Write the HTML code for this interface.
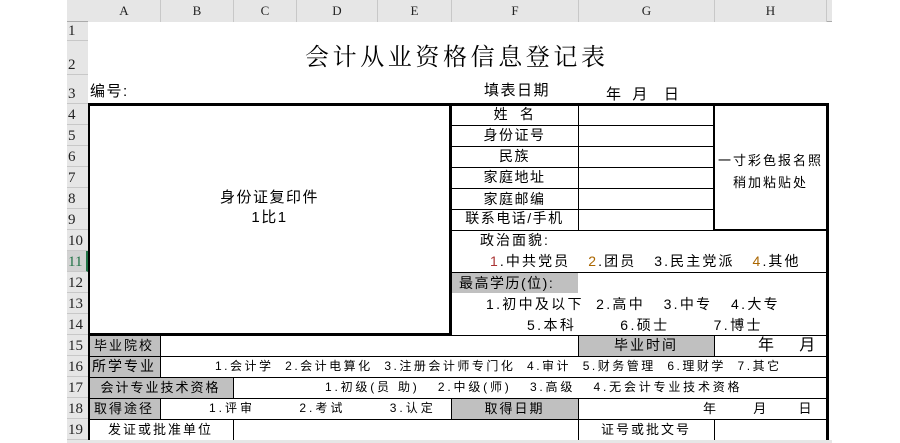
<!DOCTYPE html>
<html><head><meta charset="utf-8"><style>
*{margin:0;padding:0;box-sizing:border-box}
body{width:900px;height:443px;background:#fff;position:relative;overflow:hidden;font-family:"Liberation Sans","Noto Sans CJK SC",sans-serif;font-size:13px;color:#000}
.a{position:absolute}
.h{background:#e6e6e6;color:#222;font-family:"Liberation Serif","Noto Serif CJK SC",serif;font-size:13px;text-align:center;line-height:22px}
.rh{position:absolute;left:67px;width:21px;background:#e6e6e6;border-bottom:1px solid #c8c8c8;font-family:"Liberation Serif",serif;font-size:15px;color:#222;text-align:left;padding-left:1px;display:flex;align-items:flex-end}
.t{position:absolute;white-space:nowrap;line-height:21px;letter-spacing:1.5px}
.g{position:absolute;background:#c0c0c0}
.l{position:absolute;background:#000}
</style></head><body>
<div class="a" style="left:67px;top:0;width:765px;height:22px;background:#e6e6e6;border-bottom:1px solid #ababab"></div>
<div class="a h" style="left:88px;top:0;width:72px">A</div>
<div class="a h" style="left:160px;top:0;width:73px;border-left:1px solid #c8c8c8">B</div>
<div class="a h" style="left:233px;top:0;width:63px;border-left:1px solid #c8c8c8">C</div>
<div class="a h" style="left:296px;top:0;width:81px;border-left:1px solid #c8c8c8">D</div>
<div class="a h" style="left:377px;top:0;width:74px;border-left:1px solid #c8c8c8">E</div>
<div class="a h" style="left:451px;top:0;width:127px;border-left:1px solid #c8c8c8">F</div>
<div class="a h" style="left:578px;top:0;width:136px;border-left:1px solid #c8c8c8">G</div>
<div class="a h" style="left:714px;top:0;width:113px;border-left:1px solid #c8c8c8;border-right:1px solid #c8c8c8">H</div>
<div class="rh" style="top:22px;height:19px">1</div>
<div class="rh" style="top:41px;height:34px">2</div>
<div class="rh" style="top:75px;height:29px">3</div>
<div class="rh" style="top:104px;height:21px">4</div>
<div class="rh" style="top:125px;height:21px">5</div>
<div class="rh" style="top:146px;height:21px">6</div>
<div class="rh" style="top:167px;height:21px">7</div>
<div class="rh" style="top:188px;height:21px">8</div>
<div class="rh" style="top:209px;height:21px">9</div>
<div class="rh" style="top:230px;height:21px">10</div>
<div class="rh" style="top:251px;height:21px;background:#d2d2d2;color:#217346;border-right:2px solid #217346">11</div>
<div class="rh" style="top:272px;height:21px">12</div>
<div class="rh" style="top:293px;height:21px">13</div>
<div class="rh" style="top:314px;height:21px">14</div>
<div class="rh" style="top:335px;height:21px">15</div>
<div class="rh" style="top:356px;height:21px">16</div>
<div class="rh" style="top:377px;height:21px">17</div>
<div class="rh" style="top:398px;height:21px">18</div>
<div class="rh" style="top:419px;height:21px">19</div>
<div class="a" style="left:67px;top:440px;width:765px;height:3px;background:#e6e6e6"></div>

<div class="t" style="left:305px;top:42px;font-size:24px;line-height:32px;letter-spacing:3.6px;font-family:'Liberation Serif','Noto Serif CJK SC',serif">会计从业资格信息登记表</div>
<div class="t" style="left:90px;top:81px;font-size:15px">编号:</div>
<div class="t" style="left:484px;top:80px;font-size:15px">填表日期</div>
<div class="t" style="left:606px;top:84px;font-size:15px;letter-spacing:1px">年&nbsp; 月&nbsp;&nbsp; 日</div>

<div class="g" style="left:452px;top:273px;width:126px;height:20px"></div>
<div class="g" style="left:89px;top:336px;width:71px;height:20px"></div>
<div class="g" style="left:579px;top:336px;width:135px;height:20px"></div>
<div class="g" style="left:89px;top:357px;width:71px;height:20px"></div>
<div class="g" style="left:89px;top:378px;width:144px;height:20px"></div>
<div class="g" style="left:89px;top:399px;width:71px;height:20px"></div>
<div class="g" style="left:452px;top:399px;width:126px;height:20px"></div>

<div class="l" style="left:88px;top:103px;width:741px;height:3px"></div>
<div class="l" style="left:88px;top:103px;width:2px;height:337px"></div>
<div class="l" style="left:449px;top:103px;width:3px;height:233px"></div>
<div class="l" style="left:88px;top:333px;width:364px;height:3px"></div>
<div class="l" style="left:826px;top:103px;width:3px;height:337px"></div>
<div class="l" style="left:713px;top:103px;width:2px;height:128px"></div>
<div class="l" style="left:713px;top:229px;width:116px;height:2px"></div>
<div class="l" style="left:578px;top:104px;width:1px;height:126px"></div>
<div class="l" style="left:451px;top:125px;width:263px;height:1px"></div>
<div class="l" style="left:451px;top:146px;width:263px;height:1px"></div>
<div class="l" style="left:451px;top:167px;width:263px;height:1px"></div>
<div class="l" style="left:451px;top:188px;width:263px;height:1px"></div>
<div class="l" style="left:451px;top:209px;width:263px;height:1px"></div>
<div class="l" style="left:451px;top:230px;width:263px;height:1px"></div>
<div class="l" style="left:451px;top:272px;width:376px;height:1px"></div>
<div class="l" style="left:452px;top:335px;width:375px;height:1px"></div>
<div class="l" style="left:88px;top:356px;width:740px;height:1px"></div>
<div class="l" style="left:88px;top:377px;width:740px;height:1px"></div>
<div class="l" style="left:88px;top:398px;width:740px;height:1px"></div>
<div class="l" style="left:88px;top:419px;width:740px;height:1px"></div>
<div class="l" style="left:160px;top:335px;width:1px;height:43px"></div>
<div class="l" style="left:160px;top:398px;width:1px;height:21px"></div>
<div class="l" style="left:233px;top:377px;width:1px;height:21px"></div>
<div class="l" style="left:233px;top:419px;width:1px;height:21px"></div>
<div class="l" style="left:578px;top:335px;width:1px;height:21px"></div>
<div class="l" style="left:714px;top:335px;width:1px;height:21px"></div>
<div class="l" style="left:451px;top:398px;width:1px;height:21px"></div>
<div class="l" style="left:578px;top:398px;width:1px;height:21px"></div>
<div class="l" style="left:578px;top:419px;width:1px;height:21px"></div>
<div class="l" style="left:714px;top:419px;width:1px;height:21px"></div>

<div class="t" style="left:88px;top:188px;width:363px;text-align:center;font-size:15px;line-height:20px">身份证复印件<br>1比1</div>
<div class="t" style="left:451px;top:104px;width:127px;text-align:center;font-size:14px">姓&nbsp; 名</div>
<div class="t" style="left:451px;top:125px;width:127px;text-align:center;font-size:14px">身份证号</div>
<div class="t" style="left:451px;top:146px;width:127px;text-align:center;font-size:14px">民族</div>
<div class="t" style="left:451px;top:167px;width:127px;text-align:center;font-size:14px">家庭地址</div>
<div class="t" style="left:451px;top:189px;width:127px;text-align:center;font-size:14px">家庭邮编</div>
<div class="t" style="left:451px;top:208px;width:127px;text-align:center;font-size:14px">联系电话/手机</div>
<div class="t" style="left:714px;top:150px;width:113px;text-align:center;font-size:13px;letter-spacing:2px;line-height:22px">一寸彩色报名照<br>稍加粘贴处</div>
<div class="t" style="left:480px;top:230px;font-size:14px;letter-spacing:2px">政治面貌:</div>
<div class="t" style="left:490px;top:251px;font-size:14px;letter-spacing:2.1px"><span style="color:#a33">1</span>.中共党员&nbsp;&nbsp; <span style="color:#a60">2</span>.团员&nbsp;&nbsp; 3.民主党派&nbsp;&nbsp; <span style="color:#a60">4</span>.其他</div>
<div class="t" style="left:459px;top:273px;font-size:14px;letter-spacing:1.5px">最高学历(位):</div>
<div class="t" style="left:486px;top:294px;font-size:14px;letter-spacing:2.3px">1.初中及以下&nbsp; 2.高中&nbsp;&nbsp; 3.中专&nbsp;&nbsp; 4.大专</div>
<div class="t" style="left:527px;top:315px;font-size:14px;letter-spacing:2.4px">5.本科&nbsp;&nbsp;&nbsp;&nbsp;&nbsp;&nbsp; 6.硕士&nbsp;&nbsp;&nbsp;&nbsp;&nbsp;&nbsp; 7.博士</div>
<div class="t" style="left:88px;top:335px;width:72px;text-align:center;letter-spacing:2px">毕业院校</div>
<div class="t" style="left:578px;top:335px;width:136px;text-align:center;font-size:14px;letter-spacing:2px">毕业时间</div>
<div class="t" style="left:758px;top:335px;font-size:16px">年&nbsp;&nbsp;&nbsp; 月</div>
<div class="t" style="left:88px;top:356px;width:72px;text-align:center;font-size:14px;letter-spacing:2px">所学专业</div>
<div class="t" style="left:215px;top:356px;font-size:12px;letter-spacing:2.5px">1.会计学&nbsp; 2.会计电算化&nbsp; 3.注册会计师专门化&nbsp; 4.审计&nbsp; 5.财务管理&nbsp; 6.理财学&nbsp; 7.其它</div>
<div class="t" style="left:88px;top:377px;width:145px;text-align:center;letter-spacing:2px">会计专业技术资格</div>
<div class="t" style="left:325px;top:377px;font-size:12px;letter-spacing:2.8px">1.初级(员 助)&nbsp;&nbsp; 2.中级(师)&nbsp;&nbsp; 3.高级&nbsp;&nbsp; 4.无会计专业技术资格</div>
<div class="t" style="left:88px;top:398px;width:72px;text-align:center;letter-spacing:2px">取得途径</div>
<div class="t" style="left:209px;top:398px;font-size:12px;letter-spacing:3px">1.评审&nbsp;&nbsp;&nbsp;&nbsp;&nbsp;&nbsp; 2.考试&nbsp;&nbsp;&nbsp;&nbsp;&nbsp;&nbsp; 3.认定</div>
<div class="t" style="left:451px;top:398px;width:127px;text-align:center;letter-spacing:2px">取得日期</div>
<div class="t" style="left:703px;top:398px">年&nbsp;&nbsp;&nbsp;&nbsp;&nbsp;&nbsp; 月&nbsp;&nbsp;&nbsp;&nbsp;&nbsp; 日</div>
<div class="t" style="left:88px;top:419px;width:145px;text-align:center;letter-spacing:2px">发证或批准单位</div>
<div class="t" style="left:578px;top:419px;width:136px;text-align:center;letter-spacing:2px">证号或批文号</div>
</body></html>
